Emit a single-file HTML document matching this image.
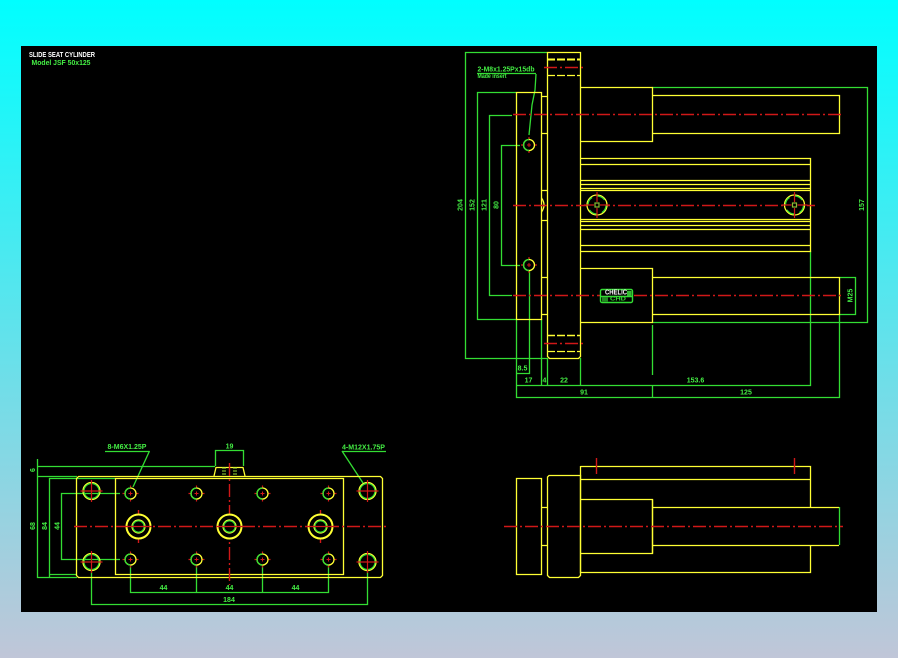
<!DOCTYPE html>
<html>
<head>
<meta charset="utf-8">
<title>Slide Seat Cylinder</title>
<style>
html,body{margin:0;padding:0;width:898px;height:658px;overflow:hidden;background:linear-gradient(180deg,#00ffff 0%,#c0c6d8 100%);}
svg{position:absolute;left:0;top:0;display:block;}
text{font-family:"Liberation Sans",sans-serif;font-size:7px;font-weight:bold;text-anchor:middle;dominant-baseline:central;}
</style>
</head>
<body>
<svg width="898" height="658" viewBox="0 0 898 658" xmlns="http://www.w3.org/2000/svg">
<defs>
<g id="small">
  <path d="M-8 0H8M0-8V8" stroke="#d01818" stroke-width="1.2"/>
  <circle r="5.5" fill="#000" stroke="#ffff33" stroke-width="1.3"/>
  <path d="M-5.5 0A5.5 5.5 0 0 1 0-5.5M-5.5 0A5.5 5.5 0 0 0 0 5.5" fill="none" stroke="#33dd33" stroke-width="1.3"/>
  <path d="M-2 0H2M0-2V2" stroke="#d01818"/>
</g>
<g id="corner">
  <circle r="8.5" fill="none" stroke="#ffff33" stroke-width="1.3"/>
  <circle r="7.5" fill="none" stroke="#33dd33" stroke-width="1.2"/>
  <path d="M-11 0H11M0-11V11" stroke="#d01818" stroke-width="1.2"/>
</g>
<g id="large">
  <circle r="12" fill="#000" stroke="#ffff33" stroke-width="2"/>
  <circle r="6.5" fill="none" stroke="#ffff33" stroke-width="1.2"/>
  <circle r="5.7" fill="none" stroke="#33dd33" stroke-width="1.2"/>
  <path d="M-13 0H13" stroke="#d01818" stroke-width="1.2"/>
</g>
<g id="side">
  <circle r="10" fill="#000" stroke="#ffff33" stroke-width="1.3"/>
  <circle r="9" fill="none" stroke="#33dd33" stroke-dasharray="9 5" stroke-width="1.2"/>
  <rect x="-2" y="-2" width="4" height="4" fill="none" stroke="#88bb33" stroke-width="1.2"/>
  <path d="M-13 0H-3M3 0H13M0-13V-3M0 3V13" stroke="#d01818" stroke-width="1.2"/>
</g>
</defs>

<rect x="21" y="46" width="856" height="566" fill="#000"/>

<!-- green dimensions -->
<g fill="none" stroke="#33dd33" stroke-width="1.3">
  <path d="M547 52.5H465.5V358.5H547"/>
  <path d="M516 92.5H477.5V319.5H516"/>
  <path d="M512 115.5H489.5V295.5H512"/>
  <path d="M520 145.5H501.5V265.5H520"/>
  <path d="M477 73.5H536"/>
  <path d="M529.5 271V373.5H516.5"/>
  <path d="M516.5 319V397.5H839.5V314"/>
  <path d="M541.5 319V385.5M547.5 358V385.5M580.5 358V385.5"/>
  <path d="M516.5 385.5H810.5V251"/>
  <path d="M652.5 325V375M652.5 385V397"/>
  <path d="M652 87.5H867.5V322.5H652"/>
  <path d="M840 277.5H855.5V314.5H840"/>
  <path d="M839.5 507V545"/>
  <path d="M37.5 459V577.5H77M37 466.5H215M37 476.5H77"/>
  <path d="M49.5 577V478.5H115"/>
  <path d="M49 574.5H77"/>
  <path d="M120 493.5H61.5V559.5H120"/>
  <path d="M215.5 466V450.5H243.5V466"/>
  <path d="M105 451.5H149.5M342 451.5H386"/>
  <path d="M130.5 565V592.5H328.5V565M196.5 565V592M262.5 565V592"/>
  <path d="M91.5 571V604.5H367.5V571"/>
  <path d="M536 74L535 90L532 105L529 135"/>
  <path d="M149.5 451L133 487"/>
  <path d="M342 451L363 483"/>
</g>

<!-- yellow geometry -->
<g fill="none" stroke="#ffff33" stroke-width="1.3">
  <path d="M516.5 92.5H541.5V319.5H516.5Z"/>
  <path d="M547.5 52.5H580.5V356.5L578.5 358.5H549.5L547.5 356.5Z"/>
  <path d="M541.5 96.5H547M541.5 133.5H547M541.5 190.5H547M541.5 220.5H547M541.5 277.5H547M541.5 314.5H547"/>
  <path d="M547 59.5H580" stroke-dasharray="8 2" stroke-width="2"/>
  <path d="M547 75.5H580" stroke-dasharray="8 2" stroke-width="1.3"/>
  <path d="M547 335.5H580" stroke-dasharray="8 2" stroke-width="1.6"/>
  <path d="M547 351.5H580" stroke-dasharray="8 2"/>
  <path d="M580.5 87.5H652.5V141.5H580.5"/>
  <path d="M580.5 268.5H652.5V322.5H580.5"/>
  <path d="M652.5 95.5H839.5V133.5H652.5"/>
  <path d="M652.5 277.5H839.5V314.5H652.5"/>
  <path d="M580 158.5H810.5V251.5H580M580 164.5H810M580 180.5H810M580 184.5H810M580 188.5H810M580 190.5H810M580 219.5H810M580 221.5H810M580 225.5H810M580 229.5H810M580 245.5H810"/>
  <path d="M78.5 476.5H380.5L382.5 478.5V575.5L380.5 577.5H78.5L76.5 575.5V478.5Z"/>
  <path d="M115.5 478.5H343.5V574.5H115.5Z"/>
  <path d="M214 476L216 467.5H243L245 476"/>
  <path d="M516.5 478.5H541.5V574.5H516.5Z"/>
  <path d="M541.5 507.5H547.5M541.5 545.5H547.5"/>
  <path d="M549 475.5H580.5V575.5L578.5 577.5H549.5L547.5 575.5V477Z"/>
  <path d="M580.5 466.5H810.5V507.5M580.5 479.5H810.5M810.5 545.5V572.5H580.5V466"/>
  <path d="M580.5 499.5H652.5V553.5H580.5"/>
  <path d="M652.5 507.5H839M652.5 545.5H839M652.5 499.5V553.5"/>
  <path d="M541.5 198Q546.5 205 541.5 212"/>
</g>
<g fill="none" stroke="#99dd33" stroke-width="1">
  <path d="M223 467V476M225 467V476M234 467V476M236 467V476" stroke-dasharray="2 1"/>
</g>

<!-- red center lines -->
<g fill="none" stroke="#d01818" stroke-width="1.4" stroke-dasharray="13 3 2 3">
  <path d="M513 114.5H843"/>
  <path d="M513 205.5H815"/>
  <path d="M513 295.5H600M634 295.5H843"/>
  <path d="M544 67.5H583"/>
  <path d="M544 343.5H583"/>
  <path d="M504 526.5H843"/>
  <path d="M74 526.5H387"/>
  <path d="M229.5 463V585"/>
  <path d="M138.5 510V543M320.5 510V543"/>
  <path d="M596.5 458V474M794.5 458V474" stroke-dasharray="none"/>
</g>

<!-- holes -->
<use href="#small" x="529" y="145"/>
<use href="#small" x="529" y="265"/>
<use href="#side" x="597" y="205"/>
<use href="#side" x="794.5" y="205"/>
<use href="#corner" x="91.5" y="491"/>
<use href="#corner" x="91.5" y="562"/>
<use href="#corner" x="367.5" y="491"/>
<use href="#corner" x="367.5" y="562"/>
<use href="#small" x="130.5" y="493.5"/>
<use href="#small" x="196.5" y="493.5"/>
<use href="#small" x="262.5" y="493.5"/>
<use href="#small" x="328.5" y="493.5"/>
<use href="#small" x="130.5" y="559.5"/>
<use href="#small" x="196.5" y="559.5"/>
<use href="#small" x="262.5" y="559.5"/>
<use href="#small" x="328.5" y="559.5"/>
<use href="#large" x="138.5" y="526.5"/>
<use href="#large" x="229.5" y="526.5"/>
<use href="#large" x="320.5" y="526.5"/>

<!-- logo -->
<rect x="600.5" y="289.5" width="32" height="13" rx="1.5" fill="#000" stroke="#33dd33" stroke-width="1.4"/>
<path d="M601 296.5H632" stroke="#33dd33" stroke-width="1.5"/>
<rect x="627" y="291" width="4.5" height="5" fill="#33bb33"/>
<rect x="602" y="297" width="6" height="4.5" fill="#228822"/>
<text x="616" y="292.8" fill="#fff" textLength="22" lengthAdjust="spacingAndGlyphs" style="font-size:7px">CHELIC</text>
<text x="618" y="299.6" fill="#33dd33" textLength="16" lengthAdjust="spacingAndGlyphs" style="font-size:5px">CHD</text>

<!-- text -->
<g fill="#ffffff">
  <text x="62" y="55.5" textLength="66" lengthAdjust="spacingAndGlyphs">SLIDE SEAT CYLINDER</text>
</g>
<g fill="#44ee44">
  <text x="61" y="63.5" textLength="59" lengthAdjust="spacingAndGlyphs">Model JSF 50x125</text>
  <text x="506" y="70" textLength="57" lengthAdjust="spacingAndGlyphs">2-M8x1.25Px15db</text>
  <text x="492" y="76.5" textLength="29" lengthAdjust="spacingAndGlyphs" style="font-size:6.5px">Made insert</text>
  <text transform="translate(461 205) rotate(-90)">204</text>
  <text transform="translate(473 205) rotate(-90)">152</text>
  <text transform="translate(485 205) rotate(-90)">121</text>
  <text transform="translate(497 205) rotate(-90)">80</text>
  <text transform="translate(862.5 205) rotate(-90)">157</text>
  <text transform="translate(851 295.5) rotate(-90)">M25</text>
  <text x="522.5" y="369">8.5</text>
  <text x="528.5" y="381">17</text>
  <text x="544.5" y="381">4</text>
  <text x="564" y="381">22</text>
  <text x="584" y="393">91</text>
  <text x="695.5" y="381">153.6</text>
  <text x="746" y="393">125</text>
  <text x="229.5" y="447">19</text>
  <text x="127" y="447.5" textLength="39" lengthAdjust="spacingAndGlyphs">8-M6X1.25P</text>
  <text x="363.5" y="448" textLength="43" lengthAdjust="spacingAndGlyphs">4-M12X1.75P</text>
  <text transform="translate(33.5 470) rotate(-90)">6</text>
  <text transform="translate(33.5 526) rotate(-90)">68</text>
  <text transform="translate(45.5 526) rotate(-90)">84</text>
  <text transform="translate(58 526) rotate(-90)">44</text>
  <text x="163.5" y="588.5">44</text>
  <text x="229.5" y="588.5">44</text>
  <text x="295.5" y="588.5">44</text>
  <text x="229" y="600.5">184</text>
</g>
</svg>
</body>
</html>
